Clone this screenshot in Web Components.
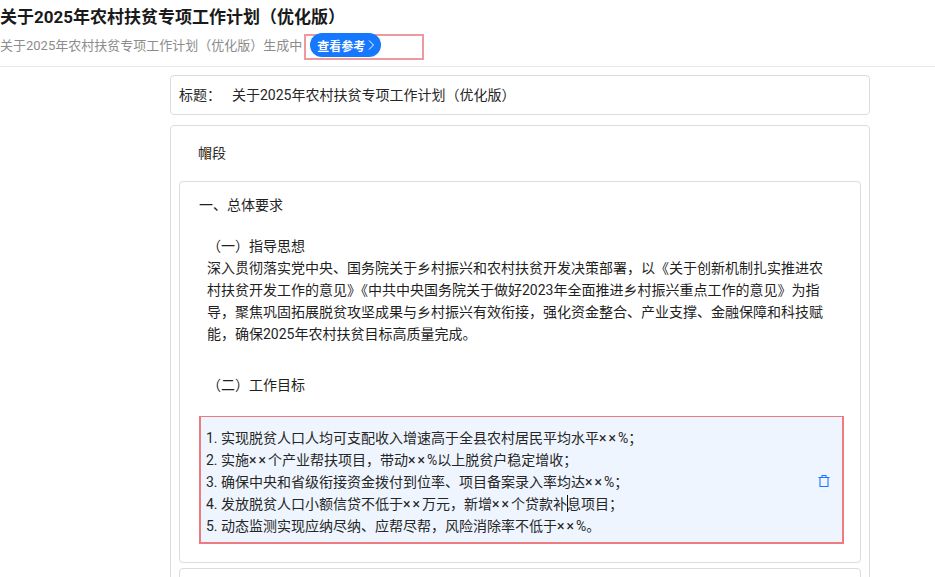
<!DOCTYPE html>
<html lang="zh-CN"><head><meta charset="utf-8">
<style>
html,body{margin:0;padding:0;height:577px;overflow:hidden;background:#fff;}
body{font-family:Roboto,"Noto Sans CJK SC",sans-serif;color:#1f1f1f;}
.x{letter-spacing:2px}
</style></head><body>
<doc-header title-text="关于2025年农村扶贫专项工作计划（优化版）" sub="关于2025年农村扶贫专项工作计划（优化版）生成中" btn="查看参考"></doc-header>
<doc-page>
  <title-card label="标题：" value="关于2025年农村扶贫专项工作计划（优化版）"></title-card>
  <main-card>
    <section-card>
      <div style="font-size:14px;line-height:22px;margin:0 0 19px 0">一、总体要求</div>
      <div style="font-size:14px;line-height:22px;padding:0 12px 0 8px">
        <div>（一）指导思想</div>
        <div>深入贯彻落实党中央、国务院关于乡村振兴和农村扶贫开发决策部署，以《关于创新机制扎实推进农村扶贫开发工作的意见》《中共中央国务院关于做好2023年全面推进乡村振兴重点工作的意见》为指导，聚焦巩固拓展脱贫攻坚成果与乡村振兴有效衔接，强化资金整合、产业支撑、金融保障和科技赋能，确保2025年农村扶贫目标高质量完成。</div>
        <div style="margin-top:29px">（二）工作目标</div>
      </div>
      <active-block>
        <div>1. 实现脱贫人口人均可支配收入增速高于全县农村居民平均水平<span class="x">××</span>%；</div>
        <div>2. 实施<span class="x">××</span>个产业帮扶项目，带动<span class="x">××</span>%以上脱贫户稳定增收；</div>
        <div>3. 确保中央和省级衔接资金拨付到位率、项目备案录入率均达<span class="x">××</span>%；</div>
        <div>4. 发放脱贫人口小额信贷不低于<span class="x">××</span>万元，新增<span class="x">××</span>个贷款补<text-caret></text-caret>息项目；</div>
        <div>5. 动态监测实现应纳尽纳、应帮尽帮，风险消除率不低于<span class="x">××</span>%。</div>
      </active-block>
    </section-card>
    <section-card style="margin-top:5px;height:60px"></section-card>
  </main-card>
</doc-page>
<script>
function def(name,css,html){
  customElements.define(name,class extends HTMLElement{
    connectedCallback(){
      if(this.shadowRoot)return;
      const r=this.attachShadow({mode:'open'});
      r.innerHTML='<style>'+css+'</style>'+(typeof html==='function'?html(this):html);
    }
  });
}
def('text-caret',`:host{display:inline-block;width:0;height:17px;vertical-align:-3px;border-left:1px solid #111;margin-right:-1px}`,``);
def('doc-header',
`:host{display:block;height:66px;border-bottom:1px solid #e8e8e8}
.t{font-size:17px;font-weight:700;line-height:24px;padding-top:5px;color:#1a1a1a}
.r{display:flex;align-items:center;height:25px;margin-top:4px}
.s{font-size:13px;color:#8c8c8c;line-height:24px}
.box{position:relative;margin:3px 0 0 2px;width:116px;height:22px;border:2px solid #ec9a9e;display:block}
.b{position:absolute;left:4px;top:-3px;width:71px;height:24px;border-radius:12px;background:#1677ff;color:#fff;font-size:12px;font-weight:700;display:flex;align-items:center;justify-content:center;gap:3px}
svg{display:block}`,
e=>`<div class="t">${e.getAttribute('title-text')}</div>
<div class="r"><span class="s">${e.getAttribute('sub')}</span><span class="box"><span class="b">${e.getAttribute('btn')}<svg width="6" height="10" viewBox="0 0 6 10" fill="none" stroke="#fff" stroke-width="1"><path d="M1 .5l4.500 4.500-4.500 4.500"/></svg></span></span></div>`);
def('doc-page',`:host{display:block;width:700px;margin:8px 0 0 170px}`,`<slot></slot>`);
def('title-card',
`:host{display:flex;align-items:center;border:1px solid #dcdcdc;border-radius:4px;font-size:14px;padding:0 0 2px 8px;color:#262626;box-sizing:content-box;height:36px}
.l{width:53px}`,
e=>`<span class="l">${e.getAttribute('label')}</span><span>${e.getAttribute('value')}</span>`);
def('main-card',
`:host{display:block;margin-top:10px;border:1px solid #dcdcdc;border-radius:4px;padding:0 8px 10px;height:470px;box-sizing:border-box}
.lab{font-size:14px;line-height:22px;padding:16px 0 17px 19px;color:#262626;position:relative}
i{position:absolute;left:27px;top:21px;width:1px;height:13px;background:#c9741f}`,
`<div class="lab"><i></i>帽段</div><slot></slot>`);
def('section-card',
`:host{display:block;border:1px solid #dcdcdc;border-radius:4px;padding:12px 16px 18px 19px}`,`<slot></slot>`);
def('active-block',
`:host{display:block;position:relative;margin:20px 0 0 0;border:solid #ee7b80;border-width:1px 2px 2px 2px;background:#eef5fe;padding:10px 5px 5px;font-size:14px;line-height:22px;color:#262626}
svg{position:absolute;right:11px;top:57px}`,
`<slot></slot><svg width="14" height="14" viewBox="0 0 14 14" fill="none" stroke="#1677ff" stroke-width="1.1"><path d="M1.500 3.500h11M3 3.500v9h8v-9M5 3.500V1.500h4v2"/></svg>`);
</script>
</body></html>
